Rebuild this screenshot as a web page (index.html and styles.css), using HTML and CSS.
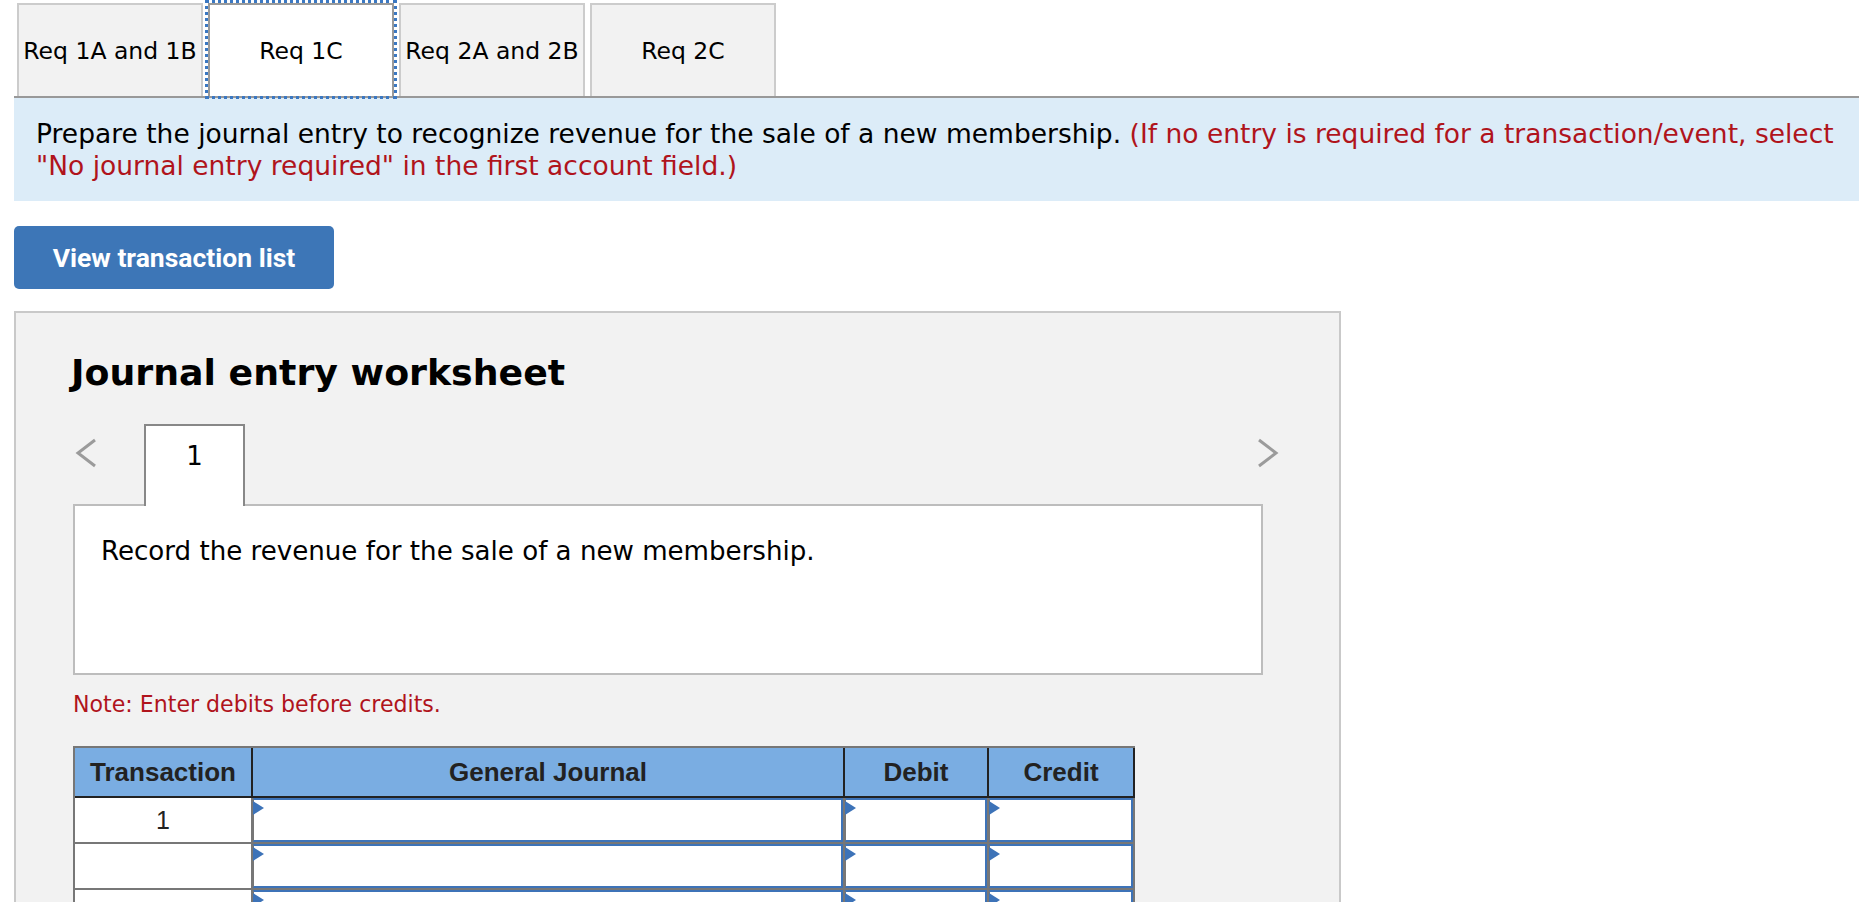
FILE: index.html
```html
<!DOCTYPE html>
<html>
<head>
<meta charset="utf-8">
<link rel="stylesheet" href="styles.css">
</head>
<body>
<div class="page">
  <div class="tabs">
    <div class="tab">Req 1A and 1B</div>
    <div class="tab active">Req 1C</div>
    <div class="tab">Req 2A and 2B</div>
    <div class="tab">Req 2C</div>
  </div>
  <div class="info">Prepare the journal entry to recognize revenue for the sale of a new membership. <span class="red">(If no entry is required for a transaction/event, select "No journal entry required" in the first account field.)</span></div>
  <button class="btn">View transaction list</button>
  <div class="panel">
    <h2 class="title">Journal entry worksheet</h2>
    <div class="nav">
      <svg class="chev left" width="24" height="32" viewBox="0 0 24 32"><polyline points="21,3 4,16 21,29" fill="none" stroke="#9b9b9b" stroke-width="3"/></svg>
      <div class="wtab">1</div>
      <svg class="chev right" width="24" height="32" viewBox="0 0 24 32"><polyline points="3,3 20,16 3,29" fill="none" stroke="#9b9b9b" stroke-width="3"/></svg>
    </div>
    <div class="record">Record the revenue for the sale of a new membership.</div>
    <p class="note">Note: Enter debits before credits.</p>
    <table class="journal">
      <colgroup>
        <col class="c1"><col class="c2"><col class="c3"><col class="c4">
      </colgroup>
      <thead>
        <tr><th>Transaction</th><th>General Journal</th><th>Debit</th><th>Credit</th></tr>
      </thead>
      <tbody>
        <tr><td class="num">1</td><td class="in"><div class="field"></div></td><td class="in"><div class="field"></div></td><td class="in"><div class="field"></div></td></tr>
        <tr><td class="num"></td><td class="in"><div class="field"></div></td><td class="in"><div class="field"></div></td><td class="in"><div class="field"></div></td></tr>
        <tr><td class="num"></td><td class="in"><div class="field"></div></td><td class="in"><div class="field"></div></td><td class="in"><div class="field"></div></td></tr>
        <tr><td class="num"></td><td class="in"><div class="field"></div></td><td class="in"><div class="field"></div></td><td class="in"><div class="field"></div></td></tr>
      </tbody>
    </table>
  </div>
</div>
</body>
</html>
```

FILE: styles.css
```css
html, body {
  margin: 0;
  padding: 0;
  background: #fff;
}
body {
  font-family: "DejaVu Sans", Verdana, sans-serif;
  color: #000;
}
.page {
  padding: 3px 7px 0 14px;
}
.tabs {
  display: flex;
  gap: 5px;
  padding-left: 3px;
  height: 93px;
  border-bottom: 2px solid #999;
}
.tab {
  box-sizing: border-box;
  width: 186px;
  height: 93px;
  border: 2px solid #cccccc;
  border-bottom: none;
  background: #f2f2f2;
  display: flex;
  align-items: center;
  justify-content: center;
  font-size: 23.5px;
  white-space: nowrap;
}
.tab.active {
  background: #fff;
  border-color: #9a9a9a;
  outline: 3px dotted #3b78c2;
  outline-offset: 0px;
}
.info {
  background: #dcecf8;
  padding: 20px 22px 19px 22px;
  font-size: 26.5px;
  line-height: 32px;
}
.red {
  color: #b0141c;
}
.btn {
  display: block;
  margin-top: 25px;
  width: 320px;
  height: 63px;
  border: none;
  border-radius: 5px;
  background: #3d76b7;
  color: #fff;
  font-family: Roboto, "Liberation Sans", sans-serif;
  font-weight: 700;
  font-size: 26.5px;
  padding: 0;
}
.panel {
  margin-top: 22px;
  width: 1327px;
  box-sizing: border-box;
  min-height: 640px;
  border: 2px solid #c9c9c9;
  background: #f2f2f2;
  padding: 38px 0 0 57px;
}
.title {
  margin: 0;
  font-size: 36.3px;
  line-height: 44px;
  font-weight: 700;
  margin-left: -2px;
}
.nav {
  margin-top: 29px;
  width: 1207px;
  height: 80px;
  display: flex;
  align-items: flex-start;
}
.chev {
  margin-top: 13px;
}
.chev.left {
  margin-left: 1px;
}
.wtab {
  position: relative;
  z-index: 1;
  margin-left: 46px;
  box-sizing: border-box;
  width: 101px;
  height: 82px;
  border: 2px solid #888;
  border-bottom: none;
  background: #fff;
  text-align: center;
  font-size: 26px;
  line-height: 32px;
  padding-top: 14px;
}
.chev.right {
  margin-left: auto;
}
.record {
  box-sizing: border-box;
  width: 1190px;
  height: 171px;
  border: 2px solid #bdbdbd;
  background: #fff;
  padding: 29px 26px;
  font-size: 26.1px;
  line-height: 32px;
}
.note {
  margin: 13px 0 0 0;
  color: #b0141c;
  font-size: 22.1px;
  line-height: 32px;
}
.journal {
  margin-top: 26px;
  border-collapse: separate;
  border-spacing: 0;
  table-layout: fixed;
  width: 1062px;
  border-top: 2px solid #777;
  border-left: 2px solid #777;
  font-family: "Liberation Sans", Arial, sans-serif;
}
.c1 { width: 178px; }
.c2 { width: 592px; }
.c3 { width: 144px; }
.c4 { width: 146px; }
.journal th {
  background: #7aade2;
  height: 48px;
  padding: 0;
  border-right: 2px solid #222;
  border-bottom: 2px solid #222;
  font-size: 26px;
  font-weight: 700;
  color: #222;
  text-align: center;
}
.journal td {
  height: 44px;
  padding: 0;
  border-right: 2px solid #777;
  border-bottom: 2px solid #777;
  background: #fff;
}
.journal td.num {
  text-align: center;
  font-size: 25px;
  color: #222;
}
.field {
  position: relative;
  box-sizing: border-box;
  height: 44px;
  border: 2px solid #3d73b8;
  border-left: 1px solid #777;
}
.field::before {
  content: "";
  position: absolute;
  left: -1px;
  top: 1px;
  border-left: 11px solid #3d73b8;
  border-top: 7px solid transparent;
  border-bottom: 7px solid transparent;
}
```
